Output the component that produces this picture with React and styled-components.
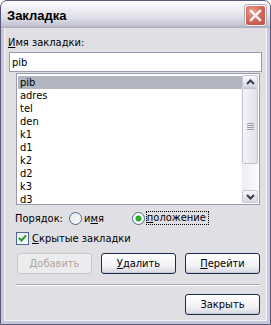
import styled, { createGlobalStyle } from 'styled-components';

const uiFont = "'DejaVu Sans Condensed', 'Liberation Sans', Arial, sans-serif";

const GlobalStyle = createGlobalStyle`
  html, body { margin: 0; padding: 0; background: #ffffff; }
  body { font-family: ${uiFont}; font-size: 11px; color: #000; }
  * { box-sizing: border-box; }
`;

const bookmarks = ['pib', 'adres', 'tel', 'den', 'k1', 'd1', 'k2', 'd2', 'k3', 'd3'];

export default function App() {
  return (
    <>
      <GlobalStyle />
      <Window>
        <TitleBar>
          <Title>Закладка</Title>
          <CloseButton>
            <svg width="13" height="13" viewBox="0 0 13 13">
              <path d="M2 2 L11 11 M11 2 L2 11" stroke="#fff" strokeWidth="2.4" strokeLinecap="square" />
            </svg>
          </CloseButton>
        </TitleBar>
        <Body>
          <Label><u>И</u>мя закладки:</Label>
          <NameInput>pib</NameInput>
          <ListBox>
            <Items>
              {bookmarks.map((name, i) => (
                <Item key={name} selected={i === 0}>{name}</Item>
              ))}
            </Items>
            <ScrollBar>
              <ArrowButton>
                <svg width="9" height="6" viewBox="0 0 9 6">
                  <path d="M1 5 L4.5 1.5 L8 5" stroke="#3c3c50" strokeWidth="2" fill="none" />
                </svg>
              </ArrowButton>
              <Track>
                <Thumb>
                  <Grip />
                  <Grip />
                  <Grip />
                  <Grip />
                </Thumb>
              </Track>
              <ArrowButton>
                <svg width="9" height="6" viewBox="0 0 9 6">
                  <path d="M1 1 L4.5 4.5 L8 1" stroke="#3c3c50" strokeWidth="2" fill="none" />
                </svg>
              </ArrowButton>
            </ScrollBar>
          </ListBox>
          <OrderRow>
            <OrderCaption>Порядок:</OrderCaption>
            <RadioLabel>
              <Radio />
              <span>и<u>м</u>я</span>
            </RadioLabel>
            <RadioLabel wide>
              <Radio checked />
              <Focus><u>п</u>оложение</Focus>
            </RadioLabel>
          </OrderRow>
          <CheckRow>
            <CheckBox>
              <svg width="9" height="9" viewBox="0 0 9 9">
                <path d="M1 4 L3.5 6.5 L8 1.5" stroke="#21a121" strokeWidth="2" fill="none" />
              </svg>
            </CheckBox>
            <span><u>С</u>крытые закладки</span>
          </CheckRow>
          <ButtonRow>
            <Button disabled>Добавить</Button>
            <Button><u>У</u>далить</Button>
            <Button><u>П</u>ерейти</Button>
          </ButtonRow>
          <Separator />
          <FooterRow>
            <Button>Закрыть</Button>
          </FooterRow>
        </Body>
      </Window>
    </>
  );
}

const Window = styled.div`
  width: 271px;
  height: 325px;
  border: 1px solid #58587c;
  border-radius: 7px 7px 0 0;
  background: #c4c4d6;
  display: flex;
  flex-direction: column;
  overflow: hidden;
`;

const TitleBar = styled.div`
  height: 27px;
  flex: none;
  display: flex;
  align-items: center;
  justify-content: space-between;
  padding: 0 4px 0 6px;
  background: linear-gradient(to bottom, #fdfdfe 0%, #eeeef3 30%, #dcdce6 65%, #c2c2d2 92%, #a8a8bc 100%);
`;

const Title = styled.div`
  font-family: 'Liberation Sans', Arial, sans-serif;
  font-weight: bold;
  font-size: 13px;
  color: #000;
  padding-top: 1px;
`;

const CloseButton = styled.div`
  width: 21px;
  height: 21px;
  border: 1px solid #ffffff;
  border-radius: 3px;
  background: radial-gradient(circle at 35% 30%, #eca493 0%, #d86a5c 45%, #c24d43 100%);
  box-shadow: 0 0 0 1px #b0a8b8;
  display: flex;
  align-items: center;
  justify-content: center;
  margin-top: 1px;
`;

const Body = styled.div`
  flex: 1;
  background: #e0dfe3;
  border-left: 3px solid #c8c8d8;
  border-right: 3px solid #c8c8d8;
  border-bottom: 3px solid #c8c8d8;
  box-shadow: inset 1px 0 0 #f4f4f8, inset -1px 0 0 #f4f4f8, inset 0 -1px 0 #f4f4f8;
  display: flex;
  flex-direction: column;
  padding: 0 3px 0 3px;
`;

const Label = styled.div`
  margin: 8px 0 0 1px;
  height: 16px;
  line-height: 13px;
`;

const NameInput = styled.div`
  margin-left: 2px;
  width: 253px;
  height: 20px;
  border: 1px solid #9a9aae;
  background: #ffffff;
  padding: 3px 0 0 2px;
  line-height: 13px;
`;

const ListBox = styled.div`
  margin: 1px 0 0 9px;
  width: 244px;
  height: 132px;
  border: 1px solid #9a9aae;
  background: #ffffff;
  display: flex;
  padding: 1px;
`;

const Items = styled.div`
  flex: 1;
  display: flex;
  flex-direction: column;
  padding-top: 1px;
`;

const Item = styled.div`
  height: 13px;
  line-height: 13px;
  padding-left: 2px;
  background: ${p => (p.selected ? '#b2b4bf' : 'transparent')};
`;

const ScrollBar = styled.div`
  width: 16px;
  display: flex;
  flex-direction: column;
  background: linear-gradient(to right, #eeeef2, #fbfbfd);
`;

const ArrowButton = styled.div`
  height: 15px;
  border: 1px solid #c8c8d6;
  border-radius: 2px;
  background: linear-gradient(to bottom, #f6f6fa, #d8d8e4);
  display: flex;
  align-items: center;
  justify-content: center;
`;

const Track = styled.div`
  flex: 1;
  padding: 0 0 26px 0;
  display: flex;
  flex-direction: column;
`;

const Thumb = styled.div`
  height: 76px;
  border: 1px solid #c0c0d0;
  border-radius: 2px;
  background: linear-gradient(to right, #f4f4f8, #e0e0ea);
  display: flex;
  flex-direction: column;
  align-items: center;
  justify-content: center;
  gap: 1px;
`;

const Grip = styled.div`
  width: 7px;
  height: 1px;
  background: #9c9cb0;
`;

const OrderRow = styled.div`
  margin: 6px 0 0 8px;
  height: 14px;
  display: flex;
  align-items: center;
`;

const OrderCaption = styled.span`
  width: 54px;
`;

const RadioLabel = styled.label`
  display: flex;
  align-items: center;
  gap: 2px;
  margin-left: ${p => (p.wide ? '28px' : '0')};
`;

const Radio = styled.span`
  width: 13px;
  height: 13px;
  border-radius: 50%;
  border: 1px solid #4a6a90;
  background: ${p =>
    p.checked
      ? 'radial-gradient(circle, #3dbd3d 0px, #21a121 2.5px, #ffffff 3.5px, #f0f0f4 100%)'
      : 'linear-gradient(135deg, #e4e4ea, #ffffff)'};
  display: inline-block;
`;

const Focus = styled.span`
  outline: 1px dotted #000;
  padding: 0 2px 0 0;
  line-height: 12px;
`;

const CheckRow = styled.div`
  margin: 6px 0 0 9px;
  height: 14px;
  display: flex;
  align-items: center;
  gap: 3px;
`;

const CheckBox = styled.span`
  width: 13px;
  height: 13px;
  border: 1px solid #4a6a90;
  background: linear-gradient(135deg, #e8e8ee, #ffffff);
  display: flex;
  align-items: center;
  justify-content: center;
`;

const ButtonRow = styled.div`
  margin: 8px 0 0 10px;
  display: flex;
  gap: 9px;
`;

const Button = styled.button`
  width: 75px;
  height: 21px;
  font-family: ${uiFont};
  font-size: 11px;
  color: ${p => (p.disabled ? '#aca899' : '#000')};
  border: 1px solid ${p => (p.disabled ? '#c9c7c0' : '#1c2c4c')};
  border-radius: 3px;
  background: ${p =>
    p.disabled ? '#ecebee' : 'linear-gradient(to bottom, #ffffff 0%, #f2f2f6 60%, #d8d8e2 100%)'};
  box-shadow: ${p => (p.disabled ? 'none' : 'inset 0 -1px 0 #c8c8d6')};
  padding: 0;
`;

const Separator = styled.div`
  margin: 10px 0 0 9px;
  width: 244px;
  height: 2px;
  border-top: 1px solid #a8a8b4;
  border-bottom: 1px solid #ffffff;
`;

const FooterRow = styled.div`
  margin: 8px 0 0 178px;
  display: flex;
`;
